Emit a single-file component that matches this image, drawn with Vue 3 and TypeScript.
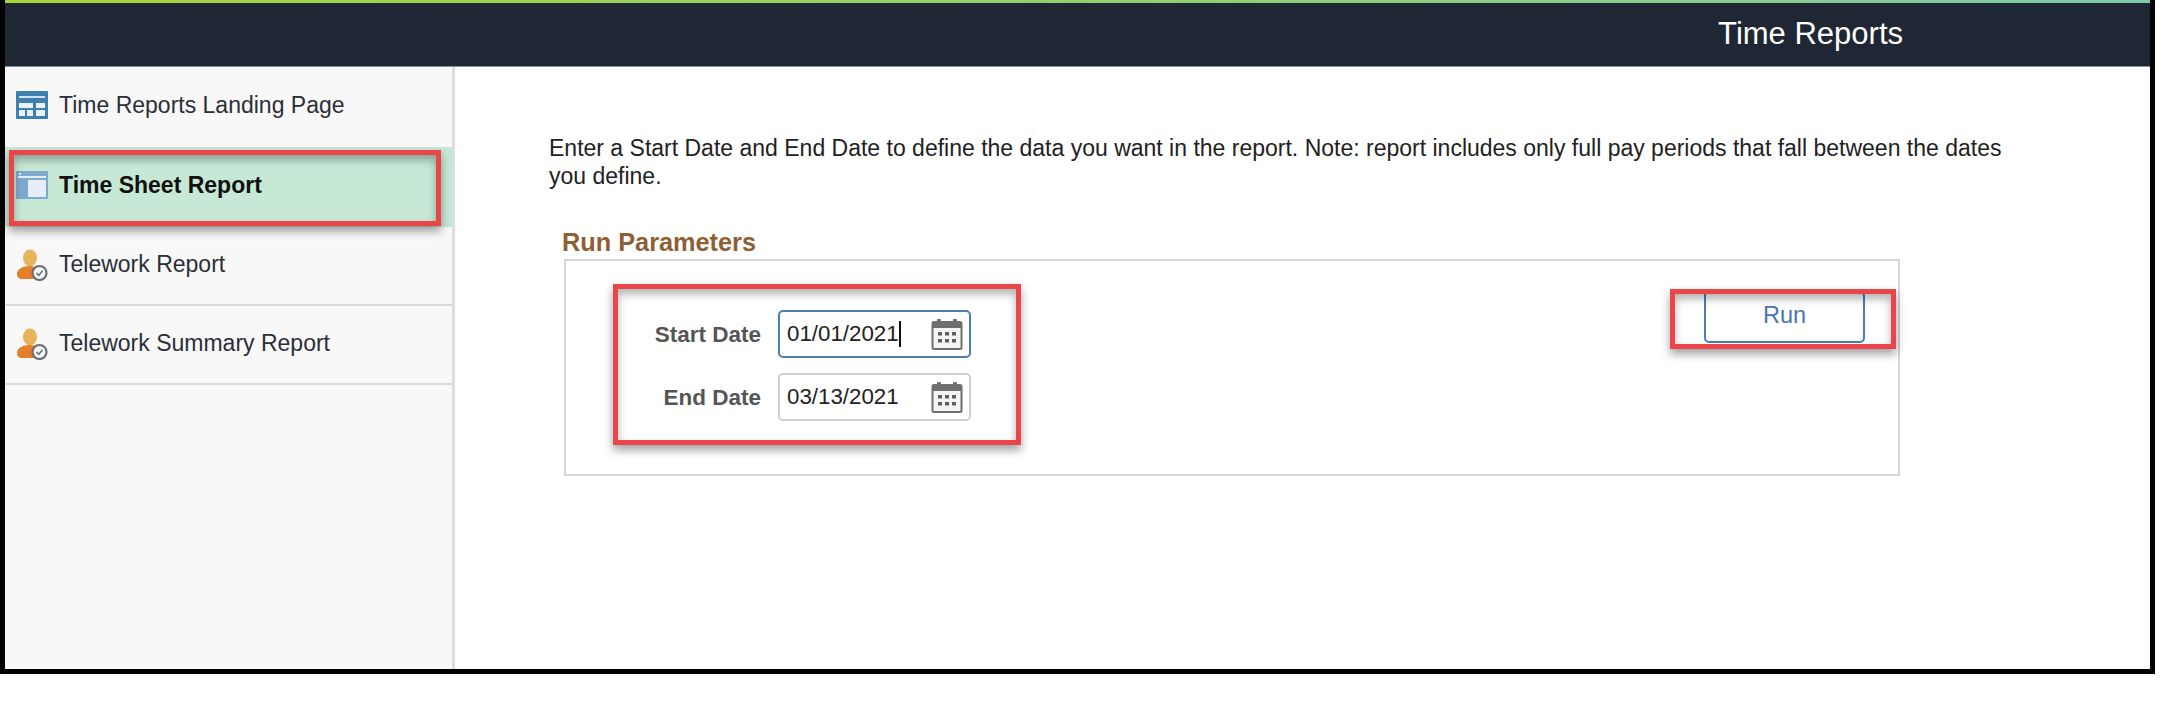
<template>
  <div class="frame">
    <div class="accent"></div>
    <header class="banner">
      <h1>Time Reports</h1>
    </header>
    <div class="body">
      <nav class="side">
        <a v-for="item in navItems" :key="item.label" class="nav-item" :class="{ active: item.active }">
          <svg v-if="item.icon === 'landing'" class="nav-icon" viewBox="0 0 32 30">
            <rect x="0" y="1" width="32" height="28" rx="1" fill="#3f7fb0" />
            <rect x="3" y="6" width="26" height="2" fill="#cfe2f0" />
            <rect x="3" y="13" width="14" height="5" fill="#e8f1f7" />
            <rect x="20" y="13" width="9" height="5" fill="#e8f1f7" />
            <rect x="3" y="20" width="6" height="6" fill="#e8f1f7" />
            <rect x="11" y="20" width="6" height="6" fill="#e8f1f7" />
            <rect x="20" y="20" width="9" height="6" fill="#e8f1f7" />
          </svg>
          <svg v-else-if="item.icon === 'sheet'" class="nav-icon" viewBox="0 0 32 30">
            <rect x="0" y="1" width="32" height="28" rx="1" fill="#7ea9cf" />
            <rect x="3" y="3" width="2" height="2" fill="#e3edf5" />
            <rect x="2" y="6" width="28" height="2" fill="#e3edf5" />
            <rect x="12" y="10" width="18" height="17" fill="#e6eef7" />
          </svg>
          <svg v-else class="nav-icon" viewBox="0 0 32 32">
            <ellipse cx="14" cy="9" rx="7" ry="8.5" fill="#e8b45a" />
            <path d="M1 25c0-5 6-8 12-8 5 0 9 2 10 5l-5 8H6c-3 0-5-2-5-5z" fill="#e57f2a" />
            <circle cx="23.5" cy="24" r="7" fill="#f3f5f6" stroke="#6c6f75" stroke-width="2.2" />
            <path d="M20.5 24l2.4 2.4 3.6-4.6" fill="none" stroke="#6c6f75" stroke-width="1.6" />
          </svg>
          <span>{{ item.label }}</span>
        </a>
      </nav>
      <main class="content">
        <p class="note">
          Enter a Start Date and End Date to define the data you want in the report. Note: report includes only full pay periods that fall between the dates you define.
        </p>
        <h2>Run Parameters</h2>
        <section class="params">
          <div class="fields">
            <div v-for="field in fields" :key="field.label" class="field">
              <label>{{ field.label }}</label>
              <div class="date-input" :class="{ focused: field.focused }">
                <span class="date-value" :class="{ caret: field.focused }">{{ field.value }}</span>
                <svg class="cal" viewBox="0 0 32 32">
                  <rect x="1.5" y="4" width="29" height="27" rx="1.5" fill="#f4f4f4" stroke="#6f6f6f" stroke-width="2" />
                  <rect x="1.5" y="4" width="29" height="6" fill="#6f6f6f" />
                  <rect x="6" y="1" width="4" height="6" rx="1" fill="#6f6f6f" />
                  <rect x="22" y="1" width="4" height="6" rx="1" fill="#6f6f6f" />
                  <g fill="#5f5f5f">
                    <rect x="7" y="14" width="4" height="3.5" />
                    <rect x="14" y="14" width="4" height="3.5" />
                    <rect x="21" y="14" width="4" height="3.5" />
                    <rect x="7" y="21" width="4" height="3.5" />
                    <rect x="14" y="21" width="4" height="3.5" />
                    <rect x="21" y="21" width="4" height="3.5" />
                  </g>
                </svg>
              </div>
            </div>
          </div>
          <button class="run" type="button">Run</button>
        </section>
      </main>
    </div>
    <!-- annotation boxes drawn over the screenshot -->
    <div class="mark mark-nav"></div>
    <div class="mark mark-dates"></div>
    <div class="mark mark-run"></div>
  </div>
</template>

<script setup lang="ts">
type NavItem = { label: string; icon: string; active?: boolean };

const navItems: NavItem[] = [
  { label: "Time Reports Landing Page", icon: "landing" },
  { label: "Time Sheet Report", icon: "sheet", active: true },
  { label: "Telework Report", icon: "person" },
  { label: "Telework Summary Report", icon: "person" },
];

const fields = [
  { label: "Start Date", value: "01/01/2021", focused: true },
  { label: "End Date", value: "03/13/2021", focused: false },
];
</script>

<style>
html,
body {
  background: #fff;
  overflow: hidden;
}
</style>

<style scoped>
.frame {
  position: relative;
  box-sizing: border-box;
  width: 2155px;
  height: 674px;
  border-left: 5px solid #000;
  border-right: 5px solid #000;
  border-bottom: 5px solid #000;
  display: flex;
  flex-direction: column;
  font-family: "Liberation Sans", Arial, sans-serif;
  background: #fff;
}

.accent {
  height: 3px;
  background: linear-gradient(90deg, #a6d53a, #8fd07a 60%, #7fc8a8);
}

.banner {
  height: 64px;
  flex: none;
  box-sizing: border-box;
  background: #1e2733;
  border-bottom: 1px solid #8a8f96;
  display: flex;
  align-items: center;
  justify-content: flex-end;
  padding-right: 247px;
  padding-bottom: 2px;
}

.banner h1 {
  margin: 0;
  font-size: 31px;
  font-weight: 400;
  color: #fff;
}

.body {
  flex: 1;
  display: flex;
  min-height: 0;
}

.side {
  width: 450px;
  flex: none;
  box-sizing: border-box;
  background: #f8f8f8;
  border-right: 3px solid #dcdce2;
}

.nav-item {
  height: 79px;
  box-sizing: border-box;
  display: flex;
  align-items: center;
  gap: 11px;
  padding-left: 11px;
  padding-bottom: 4px;
  font-size: 23px;
  color: #2b2f36;
}

.nav-item:nth-child(-n + 2) {
  height: 80px;
}

.nav-item:nth-child(n + 3) {
  padding-bottom: 2px;
  border-bottom: 2px solid #d9d9de;
}

.nav-item.active {
  background: #c6e8d5;
  font-weight: 700;
  color: #111;
}

.nav-icon {
  width: 32px;
  height: 30px;
  flex: none;
}

.nav-item:nth-child(n + 3) .nav-icon {
  height: 32px;
}

.content {
  flex: 1;
  padding: 67px 0 0 94px;
  min-width: 0;
}

.note {
  margin: 0;
  width: 1480px;
  font-size: 23px;
  line-height: 28px;
  color: #222;
}

.content h2 {
  margin: 38px 0 0 13px;
  font-size: 25.3px;
  line-height: 28px;
  font-weight: 700;
  color: #8f5f33;
}

.params {
  margin: 3px 0 0 15px;
  box-sizing: border-box;
  width: 1336px;
  height: 217px;
  border: 2px solid #d6d6da;
  display: flex;
  justify-content: space-between;
  align-items: flex-start;
  padding: 49px 33px 0 0;
}

.fields {
  display: flex;
  flex-direction: column;
  gap: 15px;
}

.field {
  display: flex;
  align-items: center;
  gap: 17px;
}

.field label {
  width: 195px;
  padding-top: 2px;
  text-align: right;
  font-size: 22.5px;
  font-weight: 700;
  color: #555;
}

.date-input {
  box-sizing: border-box;
  width: 193px;
  height: 48px;
  border: 2px solid #cfcfcf;
  border-radius: 5px;
  background: #fff;
  display: flex;
  align-items: center;
  justify-content: space-between;
  padding: 0 6px 0 7px;
}

.date-input.focused {
  border-color: #4a7fb0;
}

.date-value {
  font-size: 22.3px;
  color: #222;
}

.date-value.caret {
  border-right: 2px solid #111;
}

.cal {
  width: 32px;
  height: 32px;
  flex: none;
}

.run {
  margin-top: -19px;
  width: 161px;
  height: 52px;
  box-sizing: border-box;
  background: #fff;
  border: 2px solid #4a7db5;
  border-radius: 5px;
  color: #4c74ad;
  font-family: inherit;
  font-size: 23.5px;
  padding: 0 0 3px;
}

.mark {
  position: absolute;
  box-sizing: border-box;
  border: 5px solid #ea4549;
  box-shadow: 0 5px 9px rgba(0, 0, 0, 0.38), inset 0 5px 9px rgba(0, 0, 0, 0.3);
  pointer-events: none;
}

.mark-nav {
  left: 4px;
  top: 150px;
  width: 432px;
  height: 76px;
}

.mark-dates {
  left: 608px;
  top: 284px;
  width: 408px;
  height: 161px;
}

.mark-run {
  left: 1665px;
  top: 289px;
  width: 226px;
  height: 60px;
}
</style>
